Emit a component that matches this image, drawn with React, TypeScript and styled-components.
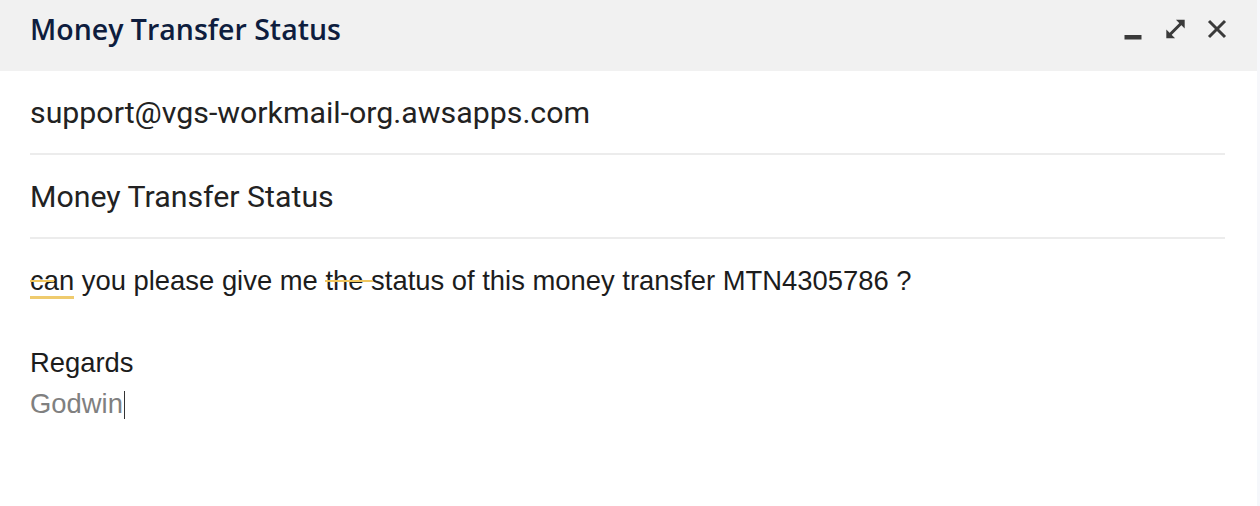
import React from "react";
import styled, { createGlobalStyle } from "styled-components";

const Global = createGlobalStyle`
  html, body { margin: 0; padding: 0; background: #ffffff; }
  body { width: 1260px; height: 506px; overflow: hidden; }
`;

const Window = styled.div`
  width: 1260px;
  height: 506px;
  background: #ffffff;
  box-sizing: border-box;
  border-right: 3px solid #f6f7fb;
`;

const Header = styled.header`
  display: flex;
  align-items: center;
  justify-content: space-between;
  height: 57px;
  padding: 0 28px 14px 30px;
  background: #f1f1f1;
`;

const Title = styled.h1`
  margin: 0;
  font-family: "Open Sans", "Noto Sans", sans-serif;
  font-weight: 600;
  font-size: 28.5px;
  color: #0e1d3e;
  letter-spacing: 0;
`;

const Controls = styled.div`
  display: flex;
  align-items: center;
  gap: 18px;
`;

const IconButton = styled.button`
  display: flex;
  align-items: center;
  justify-content: center;
  width: 24px;
  height: 24px;
  padding: 0;
  border: none;
  background: transparent;
  color: #3a3a3a;
  cursor: pointer;
`;

const Field = styled.div`
  display: flex;
  align-items: center;
  height: 82px;
  margin: 0 32px 0 30px;
  border-bottom: 2px solid #ececec;
  font-family: Roboto, "Noto Sans", sans-serif;
  font-size: 30.3px;
  color: #222222;
`;

const Body = styled.div`
  padding: 21px 30px 0 30px;
  font-family: "Liberation Sans", Arial, sans-serif;
  font-size: 27.4px;
  line-height: 41px;
  color: #1c1c1c;
`;

const Line = styled.div<{ $muted?: boolean }>`
  min-height: 41px;
  color: ${(p) => (p.$muted ? "#808080" : "#1c1c1c")};
`;

const Flagged = styled.span<{ $strikeWidth: number; $underline?: boolean }>`
  position: relative;
  &::before {
    content: "";
    position: absolute;
    left: 0;
    top: 15px;
    width: ${(p) => p.$strikeWidth}px;
    height: 2px;
    background: #efc65f;
  }
  &::after {
    content: "";
    display: ${(p) => (p.$underline ? "block" : "none")};
    position: absolute;
    left: 0;
    right: 0;
    top: 31px;
    height: 3px;
    background: #efcb6e;
  }
`;

const Caret = styled.span`
  display: inline-block;
  width: 1px;
  height: 28px;
  margin-left: 1px;
  vertical-align: -6px;
  background: #333333;
`;

export default function App() {
  return (
    <>
      <Global />
      <Window>
        <Header>
          <Title>Money Transfer Status</Title>
          <Controls>
            <IconButton aria-label="Minimize">
              <svg width="24" height="24" viewBox="0 0 24 24">
                <rect x="3.5" y="18" width="17" height="4.5" fill="currentColor" />
              </svg>
            </IconButton>
            <IconButton aria-label="Expand">
              <svg width="23" height="22" viewBox="0 0 24 24">
                <polygon points="12.5,2 22,2 22,11.5" fill="currentColor" />
                <polygon points="2,12.5 2,22 11.5,22" fill="currentColor" />
                <line x1="6" y1="18" x2="18" y2="6" stroke="currentColor" strokeWidth="3.3" />
              </svg>
            </IconButton>
            <IconButton aria-label="Close">
              <svg width="20" height="20" viewBox="0 0 20 20">
                <line x1="2" y1="2" x2="18" y2="18" stroke="currentColor" strokeWidth="3" />
                <line x1="18" y1="2" x2="2" y2="18" stroke="currentColor" strokeWidth="3" />
              </svg>
            </IconButton>
          </Controls>
        </Header>
        <Field>support@vgs-workmail-org.awsapps.com</Field>
        <Field>Money Transfer Status</Field>
        <Body>
          <Line>
            <Flagged $strikeWidth={24} $underline>can</Flagged> you please give me{" "}
            <Flagged $strikeWidth={48}>the</Flagged> status of this money transfer MTN4305786 ?
          </Line>
          <Line />
          <Line>Regards</Line>
          <Line $muted>
            Godwin<Caret />
          </Line>
        </Body>
      </Window>
    </>
  );
}
